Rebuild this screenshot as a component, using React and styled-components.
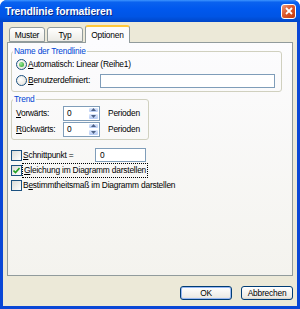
import React from 'react'
import styled, { createGlobalStyle } from 'styled-components'

const FS = '8.4px'

const Global = createGlobalStyle`
  html, body { margin: 0; padding: 0; background: #fff; }
  body { font-family: "Liberation Sans", Arial, sans-serif; }
`

const Window = styled.div`
  width: 300px;
  height: 309px;
  box-sizing: border-box;
  display: flex;
  flex-direction: column;
  background: #0a47d6;
  border-radius: 7px 7px 0 0;
  overflow: hidden;
`

const TitleBar = styled.div`
  height: 22px;
  flex: none;
  display: flex;
  align-items: center;
  padding: 0 4px 0 5px;
  background: linear-gradient(to bottom, #3d95ff 0%, #0a62ef 10%, #0058ee 40%, #0055e5 75%, #0046c8 100%);
`

const Title = styled.span`
  flex: 1;
  color: #fff;
  font-family: "Liberation Sans", Arial, sans-serif;
  font-weight: bold;
  font-size: 10.4px;
  letter-spacing: -0.1px;
  text-shadow: 1px 1px 0 #0a2a8a;
`

const CloseBtn = styled.div`
  width: 13px;
  height: 13px;
  border: 1px solid #fff;
  border-radius: 3px;
  background: linear-gradient(135deg, #f09a7c 0%, #dc5a2e 45%, #c2380c 100%);
  display: flex;
  align-items: center;
  justify-content: center;
`

const Body = styled.div`
  flex: 1;
  margin: 0 3px 3px 3px;
  background: #ece9d8;
  display: flex;
  flex-direction: column;
  padding: 3px 4px 0 4px;
  font-size: ${FS};
  letter-spacing: -0.2px;
  color: #000;
`

const Tabs = styled.div`
  display: flex;
  align-items: flex-end;
  height: 17px;
  padding-left: 2px;
  position: relative;
  z-index: 1;
`

const Tab = styled.div`
  box-sizing: border-box;
  height: ${p => (p.active ? 18 : 15)}px;
  width: ${p => p.w}px;
  margin-right: 2px;
  margin-bottom: ${p => (p.active ? -1 : 0)}px;
  border: 1px solid #919b9c;
  border-bottom: ${p => (p.active ? 'none' : '1px solid #919b9c')};
  border-top: ${p => (p.active ? '2px solid #ffc83c' : '1px solid #919b9c')};
  border-radius: 3px 3px 0 0;
  background: ${p => (p.active ? '#fcfcfe' : 'linear-gradient(to bottom, #ffffff, #ecebe5)')};
  display: flex;
  align-items: center;
  justify-content: center;
`

const Panel = styled.div`
  box-sizing: border-box;
  height: 234px;
  border: 1px solid #919b9c;
  background: linear-gradient(to bottom, #fcfcfe, #f4f3ee);
  padding: 2px 10px 0 3px;
  display: flex;
  flex-direction: column;
`

const Group = styled.fieldset`
  margin: 0;
  padding: 0 6px 2px 4px;
  border: 1px solid #d0d0bf;
  border-radius: 3px;
  width: ${p => (p.w ? `${p.w}px` : 'auto')};
  box-sizing: border-box;
  display: flex;
  flex-direction: column;
`

const Legend = styled.legend`
  padding: 0 1px;
  margin-left: -3px;
  color: #0046d5;
  line-height: 12px;
`

const Row = styled.div`
  display: flex;
  align-items: center;
  height: ${p => p.h || 16}px;
`

const Radio = styled.span`
  width: 11px;
  height: 11px;
  box-sizing: border-box;
  border-radius: 50%;
  border: 1px solid #1c5180;
  background: radial-gradient(circle at 40% 40%, #ffffff, #e0ded5);
  display: flex;
  align-items: center;
  justify-content: center;
  margin-right: 1px;
  flex: none;
  &::after {
    content: '';
    width: 5px;
    height: 5px;
    border-radius: 50%;
    background: ${p => (p.on ? 'radial-gradient(circle at 35% 35%, #a0e9a0, #21a121)' : 'transparent')};
  }
`

const Check = styled.span`
  width: 11px;
  height: 11px;
  box-sizing: border-box;
  border: 1px solid #1c5180;
  background: linear-gradient(135deg, #dcdcd7, #ffffff);
  display: flex;
  align-items: center;
  justify-content: center;
  margin-right: ${p => (p.tight ? 0 : 1)}px;
  flex: none;
`

const Label = styled.span`
  white-space: nowrap;
  width: ${p => (p.w ? `${p.w}px` : 'auto')};
  flex: none;
  padding: ${p => (p.focus ? '1px 1px' : '0')};
  border: ${p => (p.focus ? '1px dotted #000' : 'none')};
  box-sizing: border-box;
  line-height: 11px;
  u { text-decoration: underline; }
`

const TextField = styled.div`
  box-sizing: border-box;
  height: ${p => p.h || 14}px;
  width: ${p => (p.w ? `${p.w}px` : 'auto')};
  flex: ${p => (p.w ? 'none' : 1)};
  border: 1px solid #7f9db9;
  background: #fff;
  display: flex;
  align-items: center;
  padding-left: 4px;
`

const Spin = styled.div`
  box-sizing: border-box;
  height: 15px;
  width: 37px;
  border: 1px solid #7f9db9;
  background: #fff;
  display: flex;
  align-items: stretch;
  flex: none;
  margin-right: 8px;
`

const SpinValue = styled.span`
  flex: 1;
  display: flex;
  align-items: center;
  padding-left: 3px;
`

const SpinButtons = styled.div`
  width: 11px;
  display: flex;
  flex-direction: column;
`

const SpinBtn = styled.div`
  flex: 1;
  border: 1px solid #fff;
  border-radius: 2px;
  background: linear-gradient(to bottom, #dbe7fc, #b6cbf4);
  display: flex;
  align-items: center;
  justify-content: center;
`

const Spacer = styled.div`
  height: ${p => p.h}px;
  flex: none;
`

const Footer = styled.div`
  display: flex;
  justify-content: flex-end;
  gap: 9px;
  padding: 10px 0 0 0;
`

const Button = styled.div`
  box-sizing: border-box;
  width: ${p => p.w}px;
  height: 14px;
  border: 1px solid #003c74;
  border-radius: 3px;
  background: linear-gradient(to bottom, #ffffff, #ecebe6 85%, #d6d0c5);
  box-shadow: ${p => (p.def ? 'inset 0 0 0 1px #98b8f3' : 'none')};
  display: flex;
  align-items: center;
  justify-content: center;
`

const Arrow = ({ up }) => (
  <svg width="5" height="3" viewBox="0 0 5 3">
    <path d={up ? 'M0 3 L2.5 0 L5 3 Z' : 'M0 0 L2.5 3 L5 0 Z'} fill="#4d6185" />
  </svg>
)

const Spinner = ({ value }) => (
  <Spin>
    <SpinValue>{value}</SpinValue>
    <SpinButtons>
      <SpinBtn><Arrow up /></SpinBtn>
      <SpinBtn><Arrow /></SpinBtn>
    </SpinButtons>
  </Spin>
)

export default function App() {
  return (
    <>
      <Global />
      <Window>
        <TitleBar>
          <Title>Trendlinie formatieren</Title>
          <CloseBtn>
            <svg width="8" height="8" viewBox="0 0 8 8">
              <path d="M1 1 L7 7 M7 1 L1 7" stroke="#fff" strokeWidth="1.8" />
            </svg>
          </CloseBtn>
        </TitleBar>
        <Body>
          <Tabs>
            <Tab w={36}>Muster</Tab>
            <Tab w={36}>Typ</Tab>
            <Tab w={45} active>Optionen</Tab>
          </Tabs>
          <Panel>
            <Group>
              <Legend>Name der Trendlinie</Legend>
              <Row h={15}>
                <Radio on />
                <Label><u>A</u>utomatisch: Linear (Reihe1)</Label>
              </Row>
              <Row h={17}>
                <Radio />
                <Label w={72}><u>B</u>enutzerdefiniert:</Label>
                <TextField h={14} />
              </Row>
            </Group>
            <Spacer h={1} />
            <Group w={138}>
              <Legend>Trend</Legend>
              <Row h={16}>
                <Label w={47}><u>V</u>orwärts:</Label>
                <Spinner value="0" />
                <Label>Perioden</Label>
              </Row>
              <Row h={16}>
                <Label w={47}><u>R</u>ückwärts:</Label>
                <Spinner value="0" />
                <Label>Perioden</Label>
              </Row>
            </Group>
            <Spacer h={7} />
            <Row h={16}>
              <Check />
              <Label w={72}><u>S</u>chnittpunkt =</Label>
              <TextField w={51} h={14}>0</TextField>
            </Row>
            <Row h={15}>
              <Check tight>
                <svg width="7" height="7" viewBox="0 0 7 7">
                  <path d="M0.5 3.5 L2.5 5.5 L6.5 1" stroke="#21a121" strokeWidth="1.6" fill="none" />
                </svg>
              </Check>
              <Label focus><u>G</u>leichung im Diagramm darstellen</Label>
            </Row>
            <Row h={14}>
              <Check />
              <Label>B<u>e</u>stimmtheitsmaß im Diagramm darstellen</Label>
            </Row>
          </Panel>
          <Footer>
            <Button w={52} def>OK</Button>
            <Button w={52}>Abbrechen</Button>
          </Footer>
        </Body>
      </Window>
    </>
  )
}
